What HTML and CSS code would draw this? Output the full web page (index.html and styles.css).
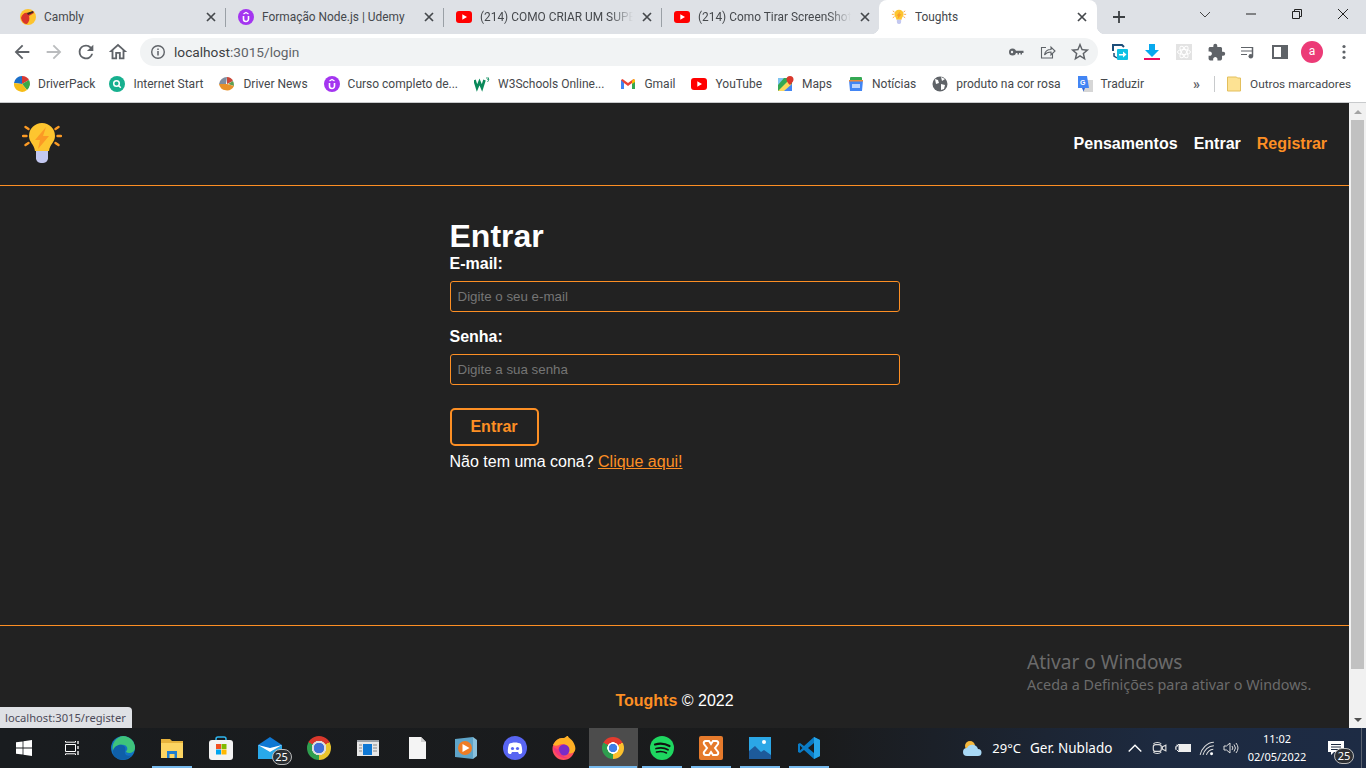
FILE: index.html
```html
<!DOCTYPE html>
<html lang="pt">
<head>
    <meta charset="UTF-8">
    <title>Toughts</title>
    <link rel="stylesheet" href="styles.css">
</head>
<body>
    <svg class="defs" width="0" height="0">
        <symbol id="bulb" viewBox="0 0 40 45">
            <path d="M7 15a13 13 0 1 1 26 0c0 6-5 8-6 15H13c-1-7-6-9-6-15z" fill="#fdc52f"/>
            <path d="M24 6L13 19h5l-2 9 11-13h-6z" fill="#fb9a25"/>
            <path d="M14 30h12v6a5 5 0 0 1-5 6h-2a5 5 0 0 1-5-6z" fill="#c3c8f0"/>
            <g stroke="#fb9a25" stroke-width="2.400" stroke-linecap="round" fill="none">
                <path d="M3.500 6l3 2M1 15h3.500M3.500 24l3-2M36.500 6l-3 2M39 15h-3.500M36.500 24l-3-2"/>
            </g>
        </symbol>
        <symbol id="udemy" viewBox="0 0 16 16">
            <circle cx="8" cy="8" r="8" fill="#a435f0"/>
            <path d="M5.500 7v3a2.500 2.500 0 0 0 5 0V7" fill="none" stroke="#fff" stroke-width="1.600"/>
            <path d="M5.500 5L8 3.500 10.500 5" fill="none" stroke="#fff" stroke-width="1.300"/>
        </symbol>
        <symbol id="yt" viewBox="0 0 16 12">
            <rect width="16" height="12" rx="3" fill="#f00"/>
            <path d="M6.300 3.300L11 6l-4.700 2.700z" fill="#fff"/>
        </symbol>
        <symbol id="close" viewBox="0 0 10 10">
            <path d="M1 1l8 8M9 1L1 9" stroke="#45484c" stroke-width="1.700" fill="none"/>
        </symbol>
    </svg>

    <div class="tabstrip">
        <div class="tab">
            <svg class="favicon" viewBox="0 0 16 16"><circle cx="8" cy="8" r="8" fill="#fdc32d"/><path d="M1 9c1-4 4-6 7-5l5-2 1 2-5 3c1 3 0 6-2 8-3 0-5-2-6-6z" fill="#d9352a"/><path d="M7 4l6-2 .5 1.500L8 6z" fill="#3a2a24"/></svg>
            <span class="tab-title">Cambly</span>
            <svg class="tab-close"><use href="#close"/></svg>
        </div>
        <i class="tab-sep"></i>
        <div class="tab">
            <svg class="favicon"><use href="#udemy"/></svg>
            <span class="tab-title">Formação Node.js | Udemy</span>
            <svg class="tab-close"><use href="#close"/></svg>
        </div>
        <i class="tab-sep"></i>
        <div class="tab">
            <svg class="favicon yt"><use href="#yt"/></svg>
            <span class="tab-title fade">(214) COMO CRIAR UM SUPE</span>
            <svg class="tab-close"><use href="#close"/></svg>
        </div>
        <i class="tab-sep"></i>
        <div class="tab">
            <svg class="favicon yt"><use href="#yt"/></svg>
            <span class="tab-title fade">(214) Como Tirar ScreenShot</span>
            <svg class="tab-close"><use href="#close"/></svg>
        </div>
        <div class="tab active">
            <svg class="favicon"><use href="#bulb"/></svg>
            <span class="tab-title">Toughts</span>
            <svg class="tab-close"><use href="#close"/></svg>
        </div>
        <svg class="new-tab" viewBox="0 0 14 14"><path d="M7 1v12M1 7h12" stroke="#3c4043" stroke-width="1.800"/></svg>
        <div class="win-controls">
            <svg viewBox="0 0 12 12"><path d="M1 4l5 5 5-5" fill="none" stroke="#444" stroke-width="1"/></svg>
            <svg viewBox="0 0 12 12"><path d="M1 6h10" stroke="#222" stroke-width="1"/></svg>
            <svg viewBox="0 0 12 12"><path d="M1.500 3.500h7v7h-7zM3.500 3.500v-2h7v7h-2" fill="none" stroke="#222" stroke-width="1"/></svg>
            <svg viewBox="0 0 12 12"><path d="M1 1l10 10M11 1L1 11" stroke="#222" stroke-width="1"/></svg>
        </div>
    </div>

    <div class="toolbar">
        <button class="tool"><svg viewBox="0 0 24 24"><path d="M20 11H7.830l5.590-5.590L12 4l-8 8 8 8 1.410-1.410L7.830 13H20z" fill="#5f6368"/></svg></button>
        <button class="tool"><svg viewBox="0 0 24 24"><path d="M12 4l-1.410 1.410L16.170 11H4v2h12.170l-5.580 5.590L12 20l8-8z" fill="#babcbe"/></svg></button>
        <button class="tool"><svg viewBox="0 0 24 24"><path d="M17.650 6.350A7.960 7.960 0 0 0 12 4a8 8 0 1 0 7.730 10h-2.080A6 6 0 1 1 12 6c1.660 0 3.140.690 4.220 1.780L13 11h7V4z" fill="#5f6368"/></svg></button>
        <button class="tool"><svg viewBox="0 0 24 24"><path d="M12 5.690l5 4.500V18h-2v-6H9v6H7v-7.810zM12 3L2 12h3v8h6v-6h2v6h6v-8h3z" fill="#5f6368"/></svg></button>
        <div class="omnibox">
            <button class="tool"><svg class="small" viewBox="0 0 16 16"><circle cx="8" cy="8" r="6.300" fill="none" stroke="#5f6368" stroke-width="1.400"/><path d="M8 7v4.500M8 4.500v1.500" stroke="#5f6368" stroke-width="1.500"/></svg></button>
            <span class="url">localhost<span class="url-path">:3015/login</span></span>
            <button class="tool"><svg class="small" viewBox="0 0 16 16"><circle cx="4.500" cy="8" r="3.500" fill="#5f6368"/><circle cx="4" cy="8" r="1.200" fill="#f1f3f4"/><path d="M7 6.700h8.500v2.300h-1.500v1.500h-1.500V9H11v1.500H9.500V9H7z" fill="#5f6368"/></svg></button>
            <button class="tool"><svg class="small" viewBox="0 0 16 16"><path d="M6 3.500H1.500v10.500h11V10" fill="none" stroke="#5f6368" stroke-width="1.100"/><path d="M4.500 11c.5-3.500 3-5.500 6.500-5.500V3l4 4-4 4V8c-3 0-5 1-6.500 3z" fill="none" stroke="#5f6368" stroke-width="1.100"/></svg></button>
            <button class="tool"><svg viewBox="0 0 24 24"><path d="M22 9.240l-7.190-.620L12 2 9.190 8.630 2 9.240l5.460 4.730L5.820 21 12 17.270 18.180 21l-1.630-7.030zM12 15.400l-3.760 2.270 1-4.280-3.320-2.880 4.380-.380L12 6.100l1.710 4.040 4.380.380-3.320 2.880 1 4.280z" fill="#5f6368"/></svg></button>
        </div>
        <button class="tool"><svg viewBox="0 0 16 16" class="ext"><path d="M1 7V1h9l2 2" fill="none" stroke="#1d4e79" stroke-width="2"/><path d="M2 9v3l3 2" fill="none" stroke="#1d4e79" stroke-width="1.500"/><rect x="5" y="5" width="11" height="11" rx="1" fill="#0fc1e4"/><path d="M7 10h4V7.500l3.500 3-3.500 3V11.500H7z" fill="#fff"/></svg></button>
        <button class="tool"><svg viewBox="0 0 16 16" class="ext"><path d="M5 0h6v6h4l-7 7-7-7h4z" fill="#07a9ee"/><rect y="14" width="16" height="2" fill="#ec0b5d"/></svg></button>
        <button class="tool"><svg viewBox="0 0 16 16" class="ext"><rect width="16" height="16" fill="#e3e3e3"/><g fill="none" stroke="#fff" stroke-width="1"><ellipse cx="8" cy="8" rx="6.500" ry="2.500"/><ellipse cx="8" cy="8" rx="6.500" ry="2.500" transform="rotate(60 8 8)"/><ellipse cx="8" cy="8" rx="6.500" ry="2.500" transform="rotate(120 8 8)"/></g></svg></button>
        <button class="tool"><svg class="puzzle" viewBox="0 0 24 24"><path d="M20.500 11H19V7c0-1.100-.9-2-2-2h-4V3.500a2.500 2.500 0 0 0-5 0V5H4c-1.100 0-1.990.9-1.990 2v3.800H3.500c1.490 0 2.700 1.210 2.700 2.700s-1.210 2.700-2.700 2.700H2V20c0 1.100.9 2 2 2h3.800v-1.500c0-1.490 1.210-2.700 2.700-2.700s2.700 1.210 2.700 2.700V22H17c1.100 0 2-.9 2-2v-4h1.500a2.500 2.500 0 0 0 0-5z" fill="#5f6368"/></svg></button>
        <button class="tool"><svg viewBox="0 0 16 16" class="ext"><path d="M1 3.500h11M1 7h11M1 10.500h6" stroke="#5f6368" stroke-width="1.200"/><path d="M12.500 3v9" stroke="#5f6368" stroke-width="1.500"/><circle cx="10.800" cy="12.300" r="2.300" fill="#5f6368"/></svg></button>
        <button class="tool"><svg viewBox="0 0 16 16" class="ext"><rect x="1" y="2" width="14" height="12" fill="none" stroke="#5f6368" stroke-width="2"/><rect x="9" y="2" width="6" height="12" fill="#5f6368"/></svg></button>
        <button class="tool"><span class="avatar">a</span></button>
        <button class="tool"><svg class="small" viewBox="0 0 16 16"><g fill="#5f6368"><circle cx="8" cy="2.500" r="1.600"/><circle cx="8" cy="8" r="1.600"/><circle cx="8" cy="13.500" r="1.600"/></g></svg></button>
    </div>

    <div class="bookmarks">
        <a class="bm"><svg class="favicon" viewBox="0 0 16 16"><path d="M8 0a8 8 0 0 0-8 7l8 1z" fill="#1b6fc9"/><path d="M8 0a8 8 0 0 1 7 4L8 8z" fill="#d83a33"/><path d="M15 4a8 8 0 0 1-2 10L8 8z" fill="#3da845"/><path d="M13 14a8 8 0 0 1-13-7l8 1z" fill="#f7bd17"/></svg>DriverPack</a>
        <a class="bm"><svg class="favicon" viewBox="0 0 16 16"><circle cx="8" cy="8" r="8" fill="#17b08f"/><circle cx="7.500" cy="7.500" r="2.800" fill="none" stroke="#fff" stroke-width="1.500"/><path d="M9.500 9.500l2.300 2.300" stroke="#fff" stroke-width="1.500"/></svg>Internet Start</a>
        <a class="bm"><svg class="favicon" viewBox="0 0 16 16"><path d="M8 1a8 8 0 0 0-8 7l7 0z" fill="#7f8da0"/><path d="M8 1a7 7 0 0 1 6 4L8 8z" fill="#c9493a"/><path d="M14 5a8 8 0 0 1 1 5L9 8z" fill="#5c9e52"/><path d="M15 10a8 8 0 0 1-15-2l8 0z" fill="#e7912a"/></svg>Driver News</a>
        <a class="bm"><svg class="favicon"><use href="#udemy"/></svg>Curso completo de...</a>
        <a class="bm"><svg class="favicon" viewBox="0 0 16 16"><path d="M.5 4l2.500 8 2.500-6 2.500 6 2.500-8" fill="none" stroke="#0a8a5a" stroke-width="2.600"/><path d="M12 2h3l-1.500 1.500H15L13.500 6" fill="none" stroke="#0a8a5a" stroke-width=".8"/></svg>W3Schools Online...</a>
        <a class="bm"><svg class="favicon" viewBox="0 0 16 16"><path d="M1 4v9h3V7l4 3 4-3v6h3V4l-1.500-1L8 7 2.500 3z" fill="#ea4335"/><path d="M1 4v9h3V7z" fill="#4285f4"/><path d="M15 4v9h-3V7z" fill="#34a853"/><path d="M13.500 3L15 4v2l-3 2V5z" fill="#fbbc05"/></svg>Gmail</a>
        <a class="bm"><svg class="favicon yt"><use href="#yt"/></svg>YouTube</a>
        <a class="bm"><svg class="favicon" viewBox="0 0 16 16"><rect y="2" width="14" height="13" fill="#34a853"/><path d="M0 2h6L0 9z" fill="#7ec4f0"/><path d="M0 15l10-10 4 4v6z" fill="#fbd75b"/><path d="M6 15l8-7v7z" fill="#4285f4"/><path d="M12 0a3.500 3.500 0 0 1 3.500 3.500C15.500 6 12 9 12 9S8.500 6 8.500 3.500A3.500 3.500 0 0 1 12 0z" fill="#d9382c"/></svg>Maps</a>
        <a class="bm"><svg class="favicon" viewBox="0 0 16 16"><rect x="2" y="1" width="12" height="5" rx="1" fill="#34a853"/><path d="M1 4h14l-1 11H2z" fill="#4285f4"/><path d="M1 4h14v1.500H1z" fill="#ea8a3a"/><rect x="4" y="8" width="8" height="4" fill="#bcd3fb"/></svg>Notícias</a>
        <a class="bm"><svg class="favicon" viewBox="0 0 16 16"><circle cx="8" cy="8" r="7.500" fill="#5f6368"/><path d="M3 3l3 1 1 3-3 1zM9 8l4 1-1 4-3 1zM9 1l4 2-3 2z" fill="#fff"/></svg>produto na cor rosa</a>
        <a class="bm"><svg class="favicon" viewBox="0 0 16 16"><rect x="6" y="4" width="10" height="12" fill="#d6d6d6"/><path d="M1 0h9l2 12H1z" fill="#4285f4"/><path d="M6.500 15.500L5 12h3z" fill="#3367d6"/><text x="3" y="9" class="translate-g">G</text></svg>Traduzir</a>
        <span class="bm-more">»</span>
        <i class="bm-sep"></i>
        <a class="bm bm-last"><svg class="favicon" viewBox="0 0 16 16"><path d="M1.500 1h9l1 1h3v13h-13z" fill="#fde293" stroke="#e3bf5c" stroke-width="1"/></svg>Outros marcadores</a>
    </div>

    <div class="viewport">
        <div class="page">
            <header class="navbar">
                <a class="logo"><svg width="40" height="45"><use href="#bulb"/></svg></a>
                <nav class="nav-links">
                    <a>Pensamentos</a>
                    <a>Entrar</a>
                    <a class="nav-accent">Registrar</a>
                </nav>
            </header>

            <main class="content">
                <h1>Entrar</h1>
                <form>
                    <div class="form-control">
                        <label for="email">E-mail:</label>
                        <input id="email" type="email" placeholder="Digite o seu e-mail">
                    </div>
                    <div class="form-control">
                        <label for="password">Senha:</label>
                        <input id="password" type="password" placeholder="Digite a sua senha">
                    </div>
                    <button class="btn" type="button">Entrar</button>
                </form>
                <p class="hint">Não tem uma cona? <a href="#">Clique aqui!</a></p>
            </main>

            <footer class="footer">
                <span class="brand">Toughts</span> &copy; 2022
            </footer>
        </div>

        <div class="scrollbar">
            <span class="arrow arrow-up"></span>
            <span class="thumb"></span>
            <span class="arrow arrow-down"></span>
        </div>

        <div class="status-tip">localhost:3015/register</div>
        <div class="activate">
            <div class="activate-title">Ativar o Windows</div>
            <div class="activate-sub">Aceda a Definições para ativar o Windows.</div>
        </div>
    </div>

    <div class="taskbar">
        <div class="task plain"><svg viewBox="0 0 16 16"><path d="M0 2.300L6.600 1.400V7.600H0zM7.400 1.300L16 0V7.600H7.400zM0 8.400H6.600V14.600L0 13.700zM7.400 8.400H16V16L7.400 14.700z" fill="#fff"/></svg></div>
        <div class="task plain"><svg viewBox="0 0 16 16"><path d="M1.500 1v1.200h10V1M1.500 15v-1.200h10V15M1.500 4.500h10v7h-10z" fill="none" stroke="#fff" stroke-width="1"/><path d="M14 1v3M14 6v3M14 11v4" stroke="#fff" stroke-width="1.300"/></svg></div>
        <div class="task"><svg viewBox="0 0 24 24"><circle cx="12" cy="12" r="12" fill="#1273c4"/><path d="M12 0a12 12 0 0 1 12 12c0 3-3 5-6 5-2 0-3-1-3-2 2-1 2-5-2-6-5-1-9 2-11 6A12 12 0 0 1 12 0z" fill="#3ec37b"/><path d="M2 15c1-5 6-7 9-6 3 1 4 3 3 6-1 4 3 6 7 4a12 12 0 0 1-17 2 7 7 0 0 1-2-6z" fill="#0f5fa8"/></svg></div>
        <div class="task open"><svg viewBox="0 0 24 24"><path d="M1 3h9l2 2h11v3H1z" fill="#e6b23c"/><path d="M1 7h22v15H1z" fill="#fcd462"/><path d="M7 15h10v7H7z" fill="#1f7ed0"/><path d="M9.500 18h5v4h-5z" fill="#fcd462"/></svg></div>
        <div class="task"><svg viewBox="0 0 24 24"><path d="M7 5V3a2 2 0 0 1 2-2h6a2 2 0 0 1 2 2v2" fill="none" stroke="#2fb6ef" stroke-width="1.500"/><rect y="4" width="24" height="20" rx="3" fill="#f3f3f3"/><path d="M7 8h5v5H7z" fill="#f25022"/><path d="M12.500 8h5v5h-5z" fill="#7fba00"/><path d="M7 13.500h5v5H7z" fill="#00a4ef"/><path d="M12.500 13.500h5v5h-5z" fill="#ffb900"/></svg></div>
        <div class="task"><svg viewBox="0 0 24 24"><path d="M0 9L12 1l12 8v14H0z" fill="#0f78d4"/><path d="M0 9l12 7 12-7v14H0z" fill="#29a9ea"/><path d="M0 9l12 7 12-7-12 3z" fill="#fff"/></svg><span class="badge">25</span></div>
        <div class="task"><span class="chrome old"></span></div>
        <div class="task"><svg viewBox="0 0 24 24"><rect x="1" y="4" width="22" height="16" fill="#e7e7e7"/><rect x="1" y="4" width="22" height="2" fill="#9aa0a6"/><rect x="7" y="8" width="9" height="11" fill="#0f78d4"/><path d="M3 9h3M3 12h3M3 15h3M17 9h4M17 12h4M17 15h4" stroke="#888" stroke-width="1"/></svg></div>
        <div class="task"><svg viewBox="0 0 24 24"><path d="M4 1h12l5 5v17H4z" fill="#f4f4f4"/><path d="M16 1l5 5h-5z" fill="#cfcfcf"/></svg></div>
        <div class="task"><svg viewBox="0 0 24 24"><path d="M1 3l18-2v22L1 21z" fill="#5ea4c8"/><path d="M19 1l4 3v16l-4 3z" fill="#8ac1dc"/><circle cx="11" cy="12" r="7" fill="#ef7c23"/><path d="M8.500 8l7 4-7 4z" fill="#fff"/></svg></div>
        <div class="task"><svg viewBox="0 0 24 24"><circle cx="12" cy="12" r="12" fill="#5865f2"/><path d="M6 8c3-2 9-2 12 0 1 3 1.500 6 1 9-1 1-2 1-3 1l-1-2H9l-1 2c-1 0-2 0-3-1-.5-3 0-6 1-9z" fill="#fff"/><circle cx="9.500" cy="12.500" r="1.600" fill="#5865f2"/><circle cx="14.500" cy="12.500" r="1.600" fill="#5865f2"/></svg></div>
        <div class="task"><svg viewBox="0 0 24 24"><circle cx="11.500" cy="13" r="11" fill="#ff4f5e"/><path d="M1 9c2-4 5-7 9-7 5 0 3-2 6-2 0 2 5 3 7 10 2 8-5 8-7 7 3-6-3-11-9-8-2 1-4 1-6 0z" fill="#ffb025"/><circle cx="12" cy="14" r="5.500" fill="#7a2bc8"/><path d="M1 11c2 8 9 12 15 11-5-1-8-4-9-8z" fill="#f0347e"/></svg></div>
        <div class="task active-app"><span class="chrome"></span></div>
        <div class="task open"><svg viewBox="0 0 24 24"><circle cx="12" cy="12" r="12" fill="#1ed760"/><g fill="none" stroke="#111" stroke-linecap="round"><path d="M5 8.500c5-1.500 10-1 14.500 1.500" stroke-width="2.200"/><path d="M6 12.500c4-1 8.500-.8 12 1.200" stroke-width="1.800"/><path d="M6.500 16c3.500-.8 7-.6 10 1" stroke-width="1.500"/></g></svg></div>
        <div class="task open"><svg viewBox="0 0 24 24"><rect width="24" height="24" rx="2" fill="#e57a2c"/><path d="M7 5h3l2 3 2-3h3a2 2 0 0 1 2 3l-3 4 3 4a2 2 0 0 1-2 3h-3l-2-3-2 3H7a2 2 0 0 1-2-3l3-4-3-4a2 2 0 0 1 2-3z" fill="none" stroke="#fff" stroke-width="2"/></svg></div>
        <div class="task open"><svg viewBox="0 0 24 24"><rect width="22" height="22" y="1" x="1" fill="#2ba7e6"/><path d="M1 23V15l6-5 6 6 3-2 7 5v4z" fill="#1d5a9a"/><circle cx="16" cy="6" r="2" fill="#fff"/></svg></div>
        <div class="task open"><svg viewBox="0 0 24 24"><path d="M17 1l6 3v16l-6 3L7 14l-4 3-2-1V8l2-1 4 3z" fill="#0a7cc6"/><path d="M17 1l6 3v16l-6 3z" fill="#25a4e8"/><path d="M17 7l-6 5 6 5z" fill="#1a1c1e"/><path d="M3 9.500v5l2.500-2.500z" fill="#1a1c1e"/></svg></div>

        <div class="tray">
            <svg class="weather" viewBox="0 0 20 16"><circle cx="8" cy="6" r="5" fill="#f5b83d"/><path d="M5 16a4 4 0 0 1 0-8 6 6 0 0 1 11 1 3.500 3.500 0 0 1 0 7z" fill="#a8d8f5"/></svg>
            <span class="temp">29°C</span>
            <span class="cond">Ger. Nublado</span>
            <span class="tray-ico"><svg viewBox="0 0 14 14"><path d="M1.500 10l5.500-5.500 5.500 5.500" fill="none" stroke="#fff" stroke-width="1.200"/></svg></span>
            <span class="tray-ico"><svg viewBox="0 0 14 14"><path d="M2 3.500a4 2.500 0 0 1 7 0M2 10.500a4 2.500 0 0 0 7 0" fill="none" stroke="#ddd" stroke-width=".9"/><rect x="2" y="4" width="7" height="6" rx="2" fill="none" stroke="#ddd"/><path d="M10 6l3-1.500v5L10 8z" fill="none" stroke="#ddd"/></svg></span>
            <span class="tray-ico"><svg viewBox="0 0 16 14"><path d="M0 6h2V3.500M0 6v2h2M2 5l2-2v8l-2-2" fill="none" stroke="#eee"/><rect x="4.500" y="3.500" width="11" height="7" fill="#eee" stroke="#eee"/></svg></span>
            <span class="tray-ico"><svg viewBox="0 0 14 14"><path d="M1 13C2 8 7 2 13 2M3.500 13C4.500 9 8 5 13 5M6.500 13c.5-2 3-5 6-5" fill="none" stroke="#ddd" stroke-width=".9"/><circle cx="11" cy="12" r="1.300" fill="#fff"/></svg></span>
            <span class="tray-ico"><svg viewBox="0 0 16 14"><path d="M1 5h2.500L7 2v10L3.500 9H1z" fill="none" stroke="#ddd"/><path d="M9 5a3 3 0 0 1 0 4M11 3.500a5.500 5.500 0 0 1 0 7M13 2a8 8 0 0 1 0 10" fill="none" stroke="#ddd"/></svg></span>
            <span class="clock"><span>11:02</span><span>02/05/2022</span></span>
            <span class="notify"><svg viewBox="0 0 16 14"><path d="M0 0h16v11H6l-3 3v-3H0z" fill="#fff"/><path d="M3 3.500h10M3 6h10M3 8.500h7" stroke="#1c2a40" stroke-width="1"/></svg><span class="badge">25</span></span>
            <i class="show-desktop"></i>
        </div>
    </div>
</body>
</html>
```

FILE: styles.css
```css
* {
    box-sizing: border-box;
}
html, body {
    height: 768px;
    overflow: hidden;
}
body {
    margin: 0;
    display: flex;
    flex-direction: column;
    font-family: "Liberation Sans", Arial, sans-serif;
    background: #222;
}
.defs {
    position: absolute;
}
.favicon {
    width: 16px;
    height: 16px;
    flex: none;
}
.favicon.yt {
    height: 12px;
}

/* browser chrome */
.tabstrip {
    height: 34px;
    flex: none;
    display: flex;
    align-items: center;
    padding-left: 8px;
    background: #dee1e6;
    font-family: Roboto, sans-serif;
    font-size: 11.9px;
    color: #45484c;
}
.tab {
    width: 217px;
    height: 34px;
    flex: none;
    display: flex;
    align-items: center;
    padding-left: 12px;
    position: relative;
}
.tab-sep {
    width: 1px;
    height: 19px;
    flex: none;
    background: #9aa0a6;
}
.tab-title {
    width: 160px;
    margin-left: 8px;
    white-space: nowrap;
    overflow: hidden;
}
.tab-title.fade {
    -webkit-mask-image: linear-gradient(90deg, #000 130px, transparent 153px);
    mask-image: linear-gradient(90deg, #000 130px, transparent 153px);
}
.tab-close {
    width: 10px;
    height: 10px;
    margin-left: 2px;
    flex: none;
}
.tab.active {
    width: 218px;
    background: #fff;
    border-radius: 8px 8px 0 0;
}
.tab.active::before, .tab.active::after {
    content: "";
    position: absolute;
    bottom: 0;
    width: 8px;
    height: 8px;
}
.tab.active::before {
    left: -8px;
    background: radial-gradient(circle at 0 0, transparent 8px, #fff 8.5px);
}
.tab.active::after {
    right: -8px;
    background: radial-gradient(circle at 100% 0, transparent 8px, #fff 8.5px);
}
.new-tab {
    width: 14px;
    height: 14px;
    margin-left: 15px;
}
.win-controls {
    margin-left: auto;
    display: flex;
    align-self: flex-start;
}
.win-controls svg {
    width: 46px;
    height: 28px;
    padding: 8px 17px;
}

.toolbar {
    height: 34px;
    flex: none;
    display: flex;
    align-items: center;
    padding: 2px 6px 0;
    background: #fff;
}
.tool {
    width: 32px;
    height: 28px;
    flex: none;
    padding: 0;
    border: 0;
    background: none;
    display: flex;
    align-items: center;
    justify-content: center;
}
.tool svg {
    width: 22px;
    height: 22px;
}
.tool svg.small, .tool svg.ext {
    width: 16px;
    height: 16px;
}
.tool svg.puzzle {
    width: 19px;
    height: 19px;
}
.omnibox {
    flex: 1;
    height: 28px;
    margin: 0 6px;
    padding: 0 2px;
    display: flex;
    align-items: center;
    border-radius: 14px;
    background: #f1f3f4;
}
.url {
    flex: 1;
    font-family: Roboto, sans-serif;
    font-size: 13.7px;
    color: #3c4043;
}
.url-path {
    color: #5f6368;
}
.avatar {
    width: 22px;
    height: 22px;
    border-radius: 50%;
    background: #ec3b77;
    color: #fff;
    font-family: Roboto, sans-serif;
    font-size: 12px;
    line-height: 21px;
    text-align: center;
}

.bookmarks {
    height: 35px;
    flex: none;
    display: flex;
    align-items: center;
    padding: 0 0 2px 14px;
    background: #fff;
    border-bottom: 1px solid #c8cacc;
    font-family: Roboto, sans-serif;
    font-size: 12px;
    color: #45484c;
}
.bm {
    display: flex;
    align-items: center;
    gap: 8px;
    margin-right: 16px;
    white-space: nowrap;
}
.bm:first-child {
    margin-right: 14px;
}
.bm-more {
    margin-left: auto;
    width: 14px;
    font-size: 14px;
    font-weight: bold;
    line-height: 14px;
    color: #5f6368;
}
.bm-sep {
    width: 1px;
    height: 16px;
    margin: 0 11px 0 7px;
    background: #c8cacc;
}
.bm-last {
    margin-right: 15px;
    font-size: 11.8px;
}
.translate-g {
    font-family: "Liberation Sans", sans-serif;
    font-size: 7px;
    font-weight: bold;
    fill: #fff;
}

/* the page itself */
.viewport {
    height: 625px;
    flex: none;
    display: flex;
    position: relative;
}
.page {
    flex: 1;
    display: flex;
    flex-direction: column;
    background: #222;
    color: #fff;
}
.navbar {
    height: 83px;
    flex: none;
    display: flex;
    align-items: center;
    justify-content: space-between;
    padding: 0 22px;
    border-bottom: 1px solid #fd8f24;
}
.logo {
    height: 45px;
    margin-top: -1px;
}
.nav-links {
    display: flex;
    gap: 16px;
    font-size: 16px;
    font-weight: bold;
}
.nav-accent {
    color: #fd8f24;
}
.content {
    width: 450px;
    flex: 1;
    margin: 0 auto;
    padding-top: 32px;
}
h1 {
    margin: 0;
    font-size: 32px;
    line-height: 37px;
}
label {
    display: block;
    margin-bottom: 8px;
    font-size: 16px;
    font-weight: bold;
    line-height: 18px;
}
.form-control {
    margin-bottom: 16px;
}
input {
    display: block;
    width: 100%;
    height: 31px;
    padding: 0 7px;
    border: 1px solid #fd8f24;
    border-radius: 3px;
    background: #222;
    color: #fff;
    font-family: "Liberation Sans", sans-serif;
    font-size: 13.33px;
}
input::placeholder {
    color: #757575;
}
.btn {
    width: 89px;
    height: 38px;
    margin-top: 23px;
    display: block;
    border: 2px solid #fd8f24;
    border-radius: 5px;
    background: none;
    color: #fd8f24;
    font-family: "Liberation Sans", sans-serif;
    font-size: 16px;
    font-weight: bold;
}
.hint {
    margin: 7px 0 0;
    font-size: 16px;
    line-height: 18px;
}
.hint a {
    color: #fd8f24;
}
.footer {
    height: 103px;
    flex: none;
    border-top: 1px solid #fd8f24;
    padding-top: 66px;
    text-align: center;
    font-size: 16px;
    line-height: 18px;
}
.brand {
    color: #fd8f24;
    font-weight: bold;
}

.scrollbar {
    width: 17px;
    flex: none;
    display: flex;
    flex-direction: column;
    background: #f1f1f1;
}
.arrow {
    height: 17px;
    flex: none;
    display: flex;
    align-items: center;
    justify-content: center;
}
.arrow::before {
    content: "";
    border: 4px solid transparent;
}
.arrow-up::before {
    border-bottom: 4px solid #a3a3a3;
    border-top: 0;
}
.arrow-down {
    margin-top: auto;
}
.arrow-down::before {
    border-top: 4px solid #505050;
    border-bottom: 0;
}
.thumb {
    height: 549px;
    margin: 0 2px;
    background: #c1c1c1;
}

.status-tip {
    position: absolute;
    left: 0;
    bottom: 0;
    width: 132px;
    height: 21px;
    padding-left: 5px;
    border-top-right-radius: 4px;
    background: #dfe1e5;
    color: #4c4a58;
    font-family: "Noto Sans", sans-serif;
    font-size: 11.2px;
    line-height: 22px;
    white-space: nowrap;
}
.activate {
    position: absolute;
    left: 1027px;
    top: 546px;
    color: #6b6b6b;
    font-family: "Noto Sans", sans-serif;
    white-space: nowrap;
}
.activate-title {
    font-size: 19.1px;
    line-height: 26px;
}
.activate-sub {
    font-size: 14.35px;
    line-height: 20px;
}

/* windows taskbar */
.taskbar {
    height: 40px;
    flex: none;
    display: flex;
    background: linear-gradient(90deg, #191c1f 0%, #1a1b1c 60%, #1d2a40 85%, #1d2b44 100%);
}
.task {
    width: 49px;
    height: 40px;
    flex: none;
    display: flex;
    align-items: center;
    justify-content: center;
    position: relative;
}
.task.plain {
    width: 48px;
}
.task.plain svg {
    width: 16px;
    height: 16px;
}
.task.plain + .task.plain + .task {
    margin-left: 2.5px;
}
.task svg {
    width: 24px;
    height: 24px;
}
.task.open::after {
    content: "";
    position: absolute;
    left: 4.5px;
    right: 4.5px;
    bottom: 0;
    height: 2px;
    background: #76b9ed;
}
.active-app {
    background: #4c4c4c;
}
.active-app::after {
    content: "";
    position: absolute;
    left: 0;
    right: 1px;
    bottom: 0;
    height: 2px;
    background: #76b9ed;
}
.chrome {
    width: 22px;
    height: 22px;
    border-radius: 50%;
    background:
        radial-gradient(circle, #3f7fe8 0 4px, #fff 4.5px 5.5px, transparent 6px),
        conic-gradient(from -60deg, #e33b2e 0 120deg, #fbc02d 120deg 240deg, #2f9e4f 240deg);
}
.chrome.old {
    width: 24px;
    height: 24px;
    background:
        radial-gradient(circle, #3f6fd8 0 5px, #ddd 5.5px 7px, transparent 7.5px),
        conic-gradient(from -60deg, #d9382c 0 120deg, #e8c32c 120deg 240deg, #2f9e4f 240deg);
}
.badge {
    position: absolute;
    right: 3px;
    bottom: 3px;
    width: 20px;
    height: 16px;
    border: 1px solid #bbb;
    border-radius: 8px;
    background: #2c2f33;
    color: #fff;
    font-family: "Noto Sans", sans-serif;
    font-size: 11px;
    line-height: 14px;
    text-align: center;
}
.tray {
    margin-left: auto;
    display: flex;
    align-items: center;
    color: #fff;
    font-family: "Noto Sans", sans-serif;
}
.weather {
    width: 20px;
    height: 16px;
}
.temp {
    margin-left: 10px;
    font-size: 13px;
}
.cond {
    width: 93px;
    margin-left: 9px;
    font-size: 13.5px;
    white-space: nowrap;
}
.tray-ico {
    width: 24px;
    display: flex;
    justify-content: center;
}
.tray-ico svg {
    width: 16px;
    height: 16px;
}
.clock {
    width: 68px;
    display: flex;
    flex-direction: column;
    align-items: center;
    gap: 2px;
    font-size: 11px;
    line-height: 16px;
}
.notify {
    width: 50px;
    height: 40px;
    display: flex;
    align-items: center;
    justify-content: center;
    position: relative;
}
.notify svg {
    width: 16px;
    height: 14px;
}
.notify .badge {
    right: 7px;
    bottom: 4px;
}
.show-desktop {
    width: 5px;
    height: 40px;
    border-left: 1px solid #5a6270;
}
```
